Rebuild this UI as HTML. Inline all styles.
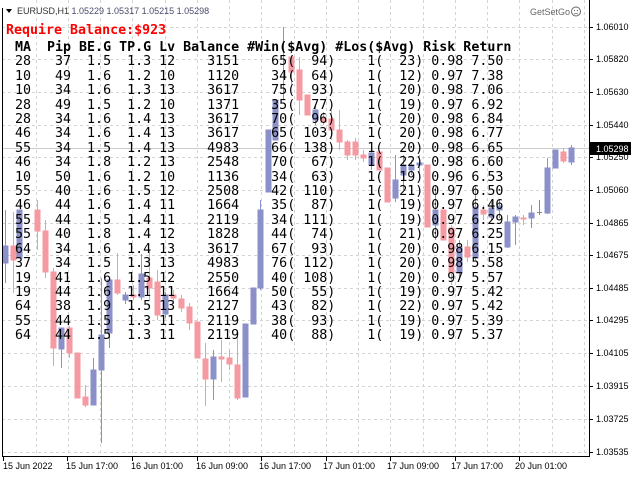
<!DOCTYPE html>
<html><head><meta charset="utf-8"><style>
html,body{margin:0;padding:0;background:#fff;width:640px;height:480px;overflow:hidden;position:relative}
svg{position:absolute;left:0;top:0}
pre{position:absolute;margin:0;font-family:"DejaVu Sans Mono","Liberation Mono",monospace;font-size:13.3px;line-height:14.4px;color:#000;left:7px;top:41px;white-space:pre}
.b{font-weight:bold}
#req{position:absolute;left:6px;top:23px;font-family:"DejaVu Sans Mono","Liberation Mono",monospace;font-size:13.3px;font-weight:bold;color:#f00;white-space:pre}
.ax{font-family:"Liberation Sans",sans-serif;font-size:9px;fill:#000}
</style></head><body>
<svg width="640" height="480" xmlns="http://www.w3.org/2000/svg">
<g stroke="#d4d4d4" stroke-dasharray="3,3" stroke-width="1">
<line x1="36.5" y1="0" x2="36.5" y2="456"/><line x1="68.5" y1="0" x2="68.5" y2="456"/><line x1="100.5" y1="0" x2="100.5" y2="456"/><line x1="132.5" y1="0" x2="132.5" y2="456"/><line x1="165.5" y1="0" x2="165.5" y2="456"/><line x1="197.5" y1="0" x2="197.5" y2="456"/><line x1="229.5" y1="0" x2="229.5" y2="456"/><line x1="261.5" y1="0" x2="261.5" y2="456"/><line x1="294.5" y1="0" x2="294.5" y2="456"/><line x1="326.5" y1="0" x2="326.5" y2="456"/><line x1="358.5" y1="0" x2="358.5" y2="456"/><line x1="390.5" y1="0" x2="390.5" y2="456"/><line x1="423.5" y1="0" x2="423.5" y2="456"/><line x1="455.5" y1="0" x2="455.5" y2="456"/><line x1="487.5" y1="0" x2="487.5" y2="456"/><line x1="519.5" y1="0" x2="519.5" y2="456"/><line x1="552.5" y1="0" x2="552.5" y2="456"/><line x1="584.5" y1="0" x2="584.5" y2="456"/>
<line x1="2" y1="27.5" x2="589" y2="27.5"/><line x1="2" y1="59.5" x2="589" y2="59.5"/><line x1="2" y1="92.5" x2="589" y2="92.5"/><line x1="2" y1="125.5" x2="589" y2="125.5"/><line x1="2" y1="157.5" x2="589" y2="157.5"/><line x1="2" y1="190.5" x2="589" y2="190.5"/><line x1="2" y1="223.5" x2="589" y2="223.5"/><line x1="2" y1="255.5" x2="589" y2="255.5"/><line x1="2" y1="288.5" x2="589" y2="288.5"/><line x1="2" y1="320.5" x2="589" y2="320.5"/><line x1="2" y1="353.5" x2="589" y2="353.5"/><line x1="2" y1="386.5" x2="589" y2="386.5"/><line x1="2" y1="419.5" x2="589" y2="419.5"/><line x1="2" y1="452.5" x2="589" y2="452.5"/>
</g>
<line x1="2" y1="148.5" x2="589" y2="148.5" stroke="#ccc"/>
<g id="c"></g>
<g>
<!-- candles: wick then body -->
<g fill="#8b91c8" stroke="#8b91c8">
<line x1="5.5" y1="210" x2="5.5" y2="283"/><rect x="3" y="246" width="5" height="17"/>
<rect x="17" y="210" width="5" height="48"/>
<line x1="61.5" y1="328" x2="61.5" y2="368"/><rect x="59" y="328" width="5" height="21"/>
<line x1="93.5" y1="358" x2="93.5" y2="405"/><rect x="91" y="370" width="5" height="35"/>
<line x1="101.5" y1="278" x2="101.5" y2="443"/><rect x="99" y="335" width="5" height="35"/>
<line x1="109.5" y1="280" x2="109.5" y2="348"/><rect x="107" y="280" width="5" height="53"/>
<line x1="125.5" y1="292" x2="125.5" y2="304"/><rect x="123" y="295" width="5" height="5"/>
<line x1="141.5" y1="254" x2="141.5" y2="300"/><rect x="139" y="274" width="5" height="23"/>
<line x1="165.5" y1="292" x2="165.5" y2="318"/><rect x="163" y="295" width="5" height="19"/>
<line x1="213.5" y1="350" x2="213.5" y2="400"/><rect x="211" y="357" width="5" height="22"/>
<rect x="243" y="324" width="5" height="73"/>
<rect x="251" y="288" width="5" height="36"/>
<line x1="260.5" y1="200" x2="260.5" y2="290"/><rect x="258" y="210" width="5" height="78"/>
<rect x="266" y="130" width="5" height="62"/>
<rect x="273" y="100" width="5" height="40"/>
<line x1="283.5" y1="27" x2="283.5" y2="100"/>
<line x1="315.5" y1="105" x2="315.5" y2="125"/><rect x="313" y="110" width="5" height="10"/>
<line x1="371.5" y1="148" x2="371.5" y2="170"/><rect x="369" y="153" width="5" height="12"/>
<line x1="395.5" y1="155" x2="395.5" y2="202"/><rect x="393" y="180" width="5" height="18"/>
<line x1="403.5" y1="155" x2="403.5" y2="190"/><rect x="401" y="165" width="5" height="10"/>
<line x1="411.5" y1="160" x2="411.5" y2="175"/><rect x="409" y="165" width="5" height="5"/>
<line x1="419.5" y1="155" x2="419.5" y2="175"/><rect x="417" y="163" width="5" height="2"/>
<line x1="435.5" y1="185" x2="435.5" y2="240"/><rect x="433" y="210" width="5" height="15"/>
<line x1="459.5" y1="240" x2="459.5" y2="280"/><rect x="457" y="247" width="5" height="26"/>
<line x1="475.5" y1="185" x2="475.5" y2="260"/><rect x="473" y="207" width="5" height="51"/>
<line x1="491.5" y1="200" x2="491.5" y2="220"/><rect x="489" y="208" width="5" height="9"/>
<line x1="499.5" y1="200" x2="499.5" y2="218"/><rect x="497" y="206" width="5" height="4"/>
<line x1="507.5" y1="215" x2="507.5" y2="248"/><rect x="505" y="222" width="5" height="25"/>
<line x1="515.5" y1="215" x2="515.5" y2="245"/><rect x="513" y="217" width="5" height="5"/>
<line x1="531.5" y1="205" x2="531.5" y2="228"/><rect x="529" y="213" width="5" height="5"/>
<line x1="547.5" y1="158" x2="547.5" y2="214"/><rect x="545" y="168" width="5" height="45"/>
<rect x="553" y="150" width="5" height="18"/>
<line x1="571.5" y1="145" x2="571.5" y2="165"/><rect x="569" y="148" width="5" height="14"/>
</g>
<line x1="539.5" y1="200" x2="539.5" y2="215" stroke="#888"/><rect x="537" y="212" width="5" height="1" fill="#888"/>
<g fill="#f59aa2" stroke="#f59aa2">
<line x1="13.5" y1="212" x2="13.5" y2="293"/><rect x="11" y="246" width="5" height="14"/>
<line x1="37.5" y1="200" x2="37.5" y2="250"/><rect x="35" y="210" width="5" height="21"/>
<line x1="45.5" y1="220" x2="45.5" y2="278"/><rect x="43" y="231" width="5" height="41"/>
<line x1="53.5" y1="268" x2="53.5" y2="366"/><rect x="51" y="272" width="5" height="76"/>
<line x1="69.5" y1="326" x2="69.5" y2="358"/><rect x="67" y="328" width="5" height="25"/>
<rect x="75" y="353" width="5" height="45"/>
<line x1="85.5" y1="385" x2="85.5" y2="407"/><rect x="83" y="397" width="5" height="8"/>
<line x1="117.5" y1="253" x2="117.5" y2="295"/><rect x="115" y="280" width="5" height="13"/>
<line x1="133.5" y1="285" x2="133.5" y2="300"/><rect x="131" y="295" width="5" height="2"/>
<line x1="149.5" y1="250" x2="149.5" y2="300"/><rect x="147" y="278" width="5" height="10"/>
<line x1="157.5" y1="270" x2="157.5" y2="320"/><rect x="155" y="282" width="5" height="33"/>
<line x1="173.5" y1="290" x2="173.5" y2="302"/><rect x="171" y="295" width="5" height="3"/>
<line x1="181.5" y1="295" x2="181.5" y2="312"/><rect x="179" y="299" width="5" height="9"/>
<line x1="189.5" y1="303" x2="189.5" y2="330"/><rect x="187" y="307" width="5" height="16"/>
<rect x="195" y="322" width="5" height="36"/>
<line x1="205.5" y1="343" x2="205.5" y2="406"/><rect x="203" y="359" width="5" height="20"/>
<line x1="221.5" y1="340" x2="221.5" y2="382"/><rect x="219" y="357" width="5" height="2"/>
<line x1="229.5" y1="350" x2="229.5" y2="370"/><rect x="227" y="358" width="5" height="6"/>
<line x1="237.5" y1="330" x2="237.5" y2="400"/><rect x="235" y="365" width="5" height="33"/>
<line x1="291.5" y1="55" x2="291.5" y2="85"/><rect x="289" y="57" width="5" height="15"/>
<line x1="299.5" y1="57" x2="299.5" y2="115"/><rect x="297" y="70" width="5" height="30"/>
<rect x="305" y="95" width="5" height="20"/>
<line x1="323.5" y1="112" x2="323.5" y2="125"/><rect x="321" y="118" width="5" height="4"/>
<line x1="331.5" y1="110" x2="331.5" y2="140"/><rect x="329" y="119" width="5" height="11"/>
<line x1="339.5" y1="110" x2="339.5" y2="150"/><rect x="337" y="130" width="5" height="12"/>
<line x1="347.5" y1="140" x2="347.5" y2="160"/><rect x="345" y="142" width="5" height="13"/>
<line x1="355.5" y1="138" x2="355.5" y2="160"/><rect x="353" y="142" width="5" height="13"/>
<line x1="363.5" y1="150" x2="363.5" y2="162"/><rect x="361" y="155" width="5" height="3"/>
<rect x="377" y="152" width="5" height="18"/>
<rect x="385" y="168" width="5" height="34"/>
<rect x="425" y="165" width="5" height="62"/>
<rect x="441" y="210" width="5" height="30"/>
<line x1="451.5" y1="225" x2="451.5" y2="285"/><rect x="449" y="228" width="5" height="45"/>
<line x1="467.5" y1="240" x2="467.5" y2="262"/><rect x="465" y="247" width="5" height="10"/>
<line x1="483.5" y1="205" x2="483.5" y2="220"/><rect x="481" y="210" width="5" height="4"/>
<line x1="523.5" y1="215" x2="523.5" y2="225"/><rect x="521" y="218" width="5" height="1"/>
<line x1="563.5" y1="148" x2="563.5" y2="163"/><rect x="561" y="152" width="5" height="9"/>
</g>
</g>
<line x1="2.5" y1="8" x2="2.5" y2="457" stroke="#000"/>
<line x1="589.5" y1="0" x2="589.5" y2="457" stroke="#000"/>
<line x1="2" y1="456.5" x2="590" y2="456.5" stroke="#000"/>
<g stroke="#000">
<line x1="590" y1="27.5" x2="593" y2="27.5"/><line x1="590" y1="59.5" x2="593" y2="59.5"/><line x1="590" y1="92.5" x2="593" y2="92.5"/><line x1="590" y1="125.5" x2="593" y2="125.5"/><line x1="590" y1="157.5" x2="593" y2="157.5"/><line x1="590" y1="190.5" x2="593" y2="190.5"/><line x1="590" y1="223.5" x2="593" y2="223.5"/><line x1="590" y1="255.5" x2="593" y2="255.5"/><line x1="590" y1="288.5" x2="593" y2="288.5"/><line x1="590" y1="320.5" x2="593" y2="320.5"/><line x1="590" y1="353.5" x2="593" y2="353.5"/><line x1="590" y1="386.5" x2="593" y2="386.5"/><line x1="590" y1="419.5" x2="593" y2="419.5"/><line x1="590" y1="452.5" x2="593" y2="452.5"/>
<line x1="3.5" y1="457" x2="3.5" y2="461"/><line x1="67.5" y1="457" x2="67.5" y2="461"/><line x1="132.5" y1="457" x2="132.5" y2="461"/><line x1="197.5" y1="457" x2="197.5" y2="461"/><line x1="261.5" y1="457" x2="261.5" y2="461"/><line x1="326.5" y1="457" x2="326.5" y2="461"/><line x1="390.5" y1="457" x2="390.5" y2="461"/><line x1="455.5" y1="457" x2="455.5" y2="461"/><line x1="519.5" y1="457" x2="519.5" y2="461"/>
</g>
<g class="ax">
<text x="596" y="30">1.06010</text><text x="596" y="62">1.05820</text><text x="596" y="95">1.05630</text><text x="596" y="128">1.05440</text><text x="596" y="160">1.05250</text><text x="596" y="193">1.05060</text><text x="596" y="226">1.04865</text><text x="596" y="258">1.04675</text><text x="596" y="291">1.04485</text><text x="596" y="323">1.04295</text><text x="596" y="356">1.04105</text><text x="596" y="389">1.03915</text><text x="596" y="422">1.03725</text><text x="596" y="455">1.03535</text>
<text x="3" y="469">15 Jun 2022</text><text x="66" y="469">15 Jun 17:00</text><text x="131" y="469">16 Jun 01:00</text><text x="196" y="469">16 Jun 09:00</text><text x="259" y="469">16 Jun 17:00</text><text x="323" y="469">17 Jun 01:00</text><text x="387" y="469">17 Jun 09:00</text><text x="451" y="469">17 Jun 17:00</text><text x="515" y="469">20 Jun 01:00</text>
</g>
<rect x="590" y="142" width="41" height="13" fill="#000"/>
<text x="596" y="152" class="ax" style="fill:#fff">1.05298</text>
<polygon points="6,9 12,9 9,13" fill="#000"/>
<text x="17" y="14" class="ax" style="fill:#333">EURUSD,H1  <tspan fill="#4a4a6a">1.05229 1.05317 1.05215 1.05298</tspan></text>
<text x="530" y="15" class="ax" style="fill:#666">GetSetGo</text>
<circle cx="576" cy="11.5" r="4.5" fill="none" stroke="#666"/>
<circle cx="574.5" cy="10.5" r="0.6" fill="#666"/><circle cx="577.5" cy="10.5" r="0.6" fill="#666"/>
<path d="M574 14.2 Q576 12.6 578 14.2" fill="none" stroke="#666" stroke-width="0.8"/>
</svg>
<div id="req">Require Balance:$923</div>
<pre><span class="b"> MA  Pip BE.G TP.G Lv Balance #Win($Avg) #Los($Avg) Risk Return</span>
 28   37  1.5  1.3 12    3151    65(  94)    1(  23) 0.98 7.50
 10   49  1.6  1.2 10    1120    34(  64)    1(  12) 0.97 7.38
 10   34  1.6  1.3 13    3617    75(  93)    1(  20) 0.98 7.06
 28   49  1.5  1.2 10    1371    35(  77)    1(  19) 0.97 6.92
 28   34  1.6  1.4 13    3617    70(  96)    1(  20) 0.98 6.84
 46   34  1.6  1.4 13    3617    65( 103)    1(  20) 0.98 6.77
 55   34  1.5  1.4 13    4983    66( 138)    1(  20) 0.98 6.65
 46   34  1.8  1.2 13    2548    70(  67)    1(  22) 0.98 6.60
 10   50  1.6  1.2 10    1136    34(  63)    1(  19) 0.96 6.53
 55   40  1.6  1.5 12    2508    42( 110)    1(  21) 0.97 6.50
 46   44  1.6  1.4 11    1664    35(  87)    1(  19) 0.97 6.46
 55   44  1.5  1.4 11    2119    34( 111)    1(  19) 0.97 6.29
 55   40  1.8  1.4 12    1828    44(  74)    1(  21) 0.97 6.25
 64   34  1.6  1.4 13    3617    67(  93)    1(  20) 0.98 6.15
 37   34  1.5  1.3 13    4983    76( 112)    1(  20) 0.98 5.58
 19   41  1.6  1.5 12    2550    40( 108)    1(  20) 0.97 5.57
 19   44  1.6  1.1 11    1664    50(  55)    1(  19) 0.97 5.42
 64   38  1.9  1.5 13    2127    43(  82)    1(  22) 0.97 5.42
 55   44  1.5  1.3 11    2119    38(  93)    1(  19) 0.97 5.39
 64   44  1.5  1.3 11    2119    40(  88)    1(  19) 0.97 5.37</pre>
</body></html>
